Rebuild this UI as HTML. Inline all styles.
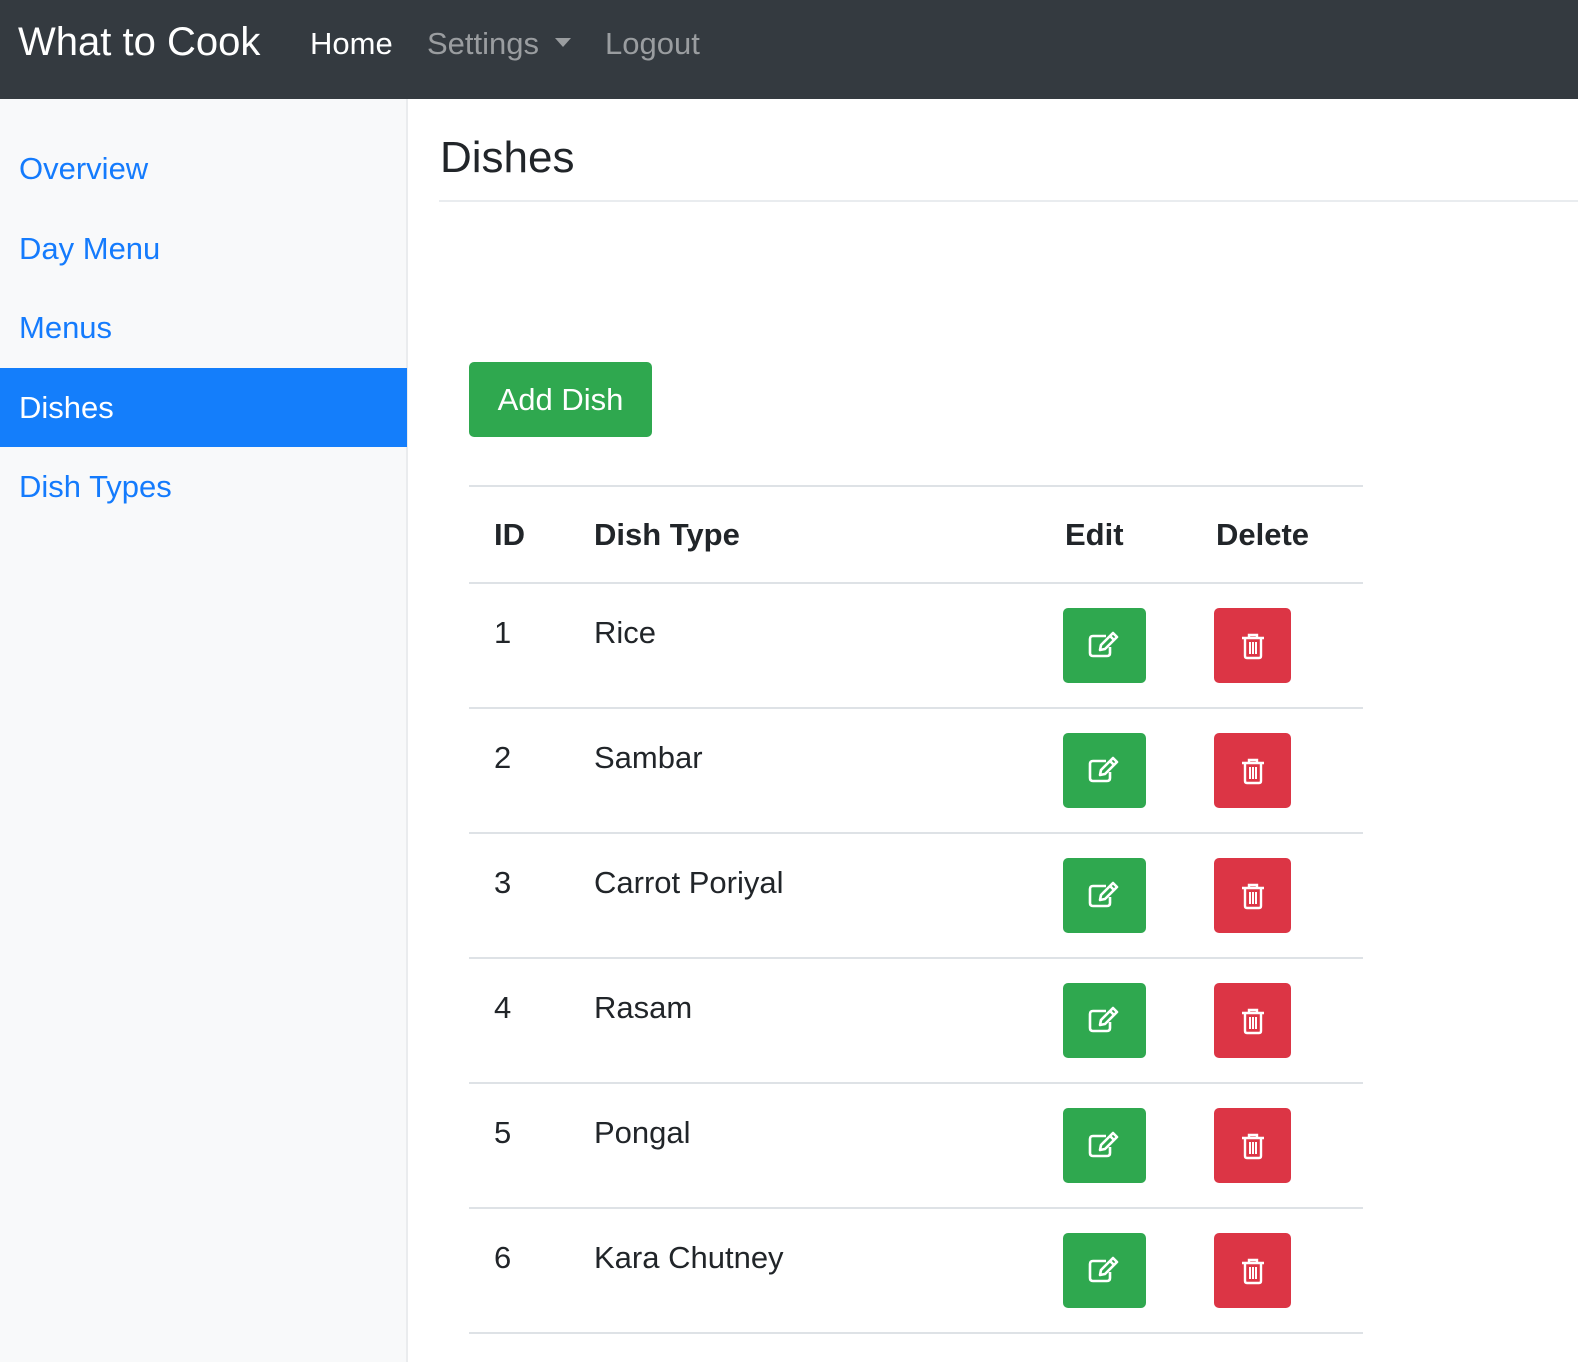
<!DOCTYPE html>
<html><head><meta charset="utf-8"><style>
*{box-sizing:border-box;margin:0;padding:0}
body{width:1578px;height:1362px;overflow:hidden;background:#fff;font-family:"Liberation Sans",Arial,sans-serif;position:relative;color:#212529}
.nav{position:absolute;left:0;top:0;width:1578px;height:99px;background:#343a40}
.nav span{position:absolute;top:22px;font-size:31px;line-height:44px}
.side{position:absolute;left:0;top:99px;width:408px;height:1263px;background:#f8f9fa;border-right:2px solid #eaecee}
.side div{position:absolute;left:0;width:407px;height:79px;padding-left:19px;font-size:31px;line-height:79px;color:#147bfd}
.side div.act{background:#147efb;color:#fff}
h1{position:absolute;left:440px;top:130px;font-size:44px;font-weight:normal;line-height:56px;color:#212529}
.hr{position:absolute;left:439px;top:200px;width:1139px;height:2px;background:#e9ecef}
.add{position:absolute;left:469px;top:362px;width:183px;height:75px;background:#2fa84f;border-radius:5px;color:#fff;font-size:31px;line-height:75px;text-align:center}
.line{position:absolute;left:469px;width:894px;height:2px;background:#dee2e6}
.t{position:absolute;font-size:31px;line-height:40px}
.b{font-weight:bold}
.eb,.db{position:absolute;height:75px;border-radius:5px;display:flex;align-items:center;justify-content:center}
.eb{left:1063px;width:83px;background:#2fa84f}
.db{left:1214px;width:77px;background:#dc3545}
</style></head><body>
<div class="nav">
<span style="left:18px;font-size:40px;color:#fff;top:20px">What to Cook</span>
<span style="left:310px;color:#fff">Home</span>
<span style="left:427px;color:#9a9da0">Settings</span>
<svg style="position:absolute;left:555px;top:38px" width="16" height="10"><path d="M0 0H16L8 9Z" fill="#9a9da0"/></svg>
<span style="left:605px;color:#9a9da0">Logout</span>
</div>
<div class="side">
<div style="top:30px">Overview</div>
<div style="top:110px">Day Menu</div>
<div style="top:189px">Menus</div>
<div class="act" style="top:269px">Dishes</div>
<div style="top:348px">Dish Types</div>
</div>
<h1>Dishes</h1>
<div class="hr"></div>
<div class="add">Add Dish</div>
<div class="line" style="top:485px"></div>
<div class="t b" style="left:494px;top:515px">ID</div>
<div class="t b" style="left:594px;top:515px">Dish Type</div>
<div class="t b" style="left:1065px;top:515px">Edit</div>
<div class="t b" style="left:1216px;top:515px">Delete</div>
<div class="line" style="top:582px"></div>
<div id="rows"></div>
<script>
var names=["Rice","Sambar","Carrot Poriyal","Rasam","Pongal","Kara Chutney"];
var h="";
var edit='<svg width="34" height="30" viewBox="0 0 34 30" fill="none" stroke="#fff" stroke-width="2.6" stroke-linejoin="round"><path d="M18 5H5Q2 5 2 8V22Q2 25 5 25H19Q22 25 22 22V16"/><path d="M12 19L13 14L25 2L29 6L17 18Z"/><path d="M22 5L26 9"/></svg>';
var del='<svg width="26" height="28" viewBox="0 0 26 28" fill="none" stroke="#fff" stroke-width="2.4"><path d="M2 6H24M9 6V3H17V6M5 6V24Q5 26 7 26H19Q21 26 21 24V6"/><path d="M10 10V22M13 10V22M16 10V22" stroke-width="2"/></svg>';
for(var i=0;i<6;i++){var y=583+i*125;
h+='<div class="t" style="left:494px;top:'+(y+30)+'px">'+(i+1)+'</div>';
h+='<div class="t" style="left:594px;top:'+(y+30)+'px">'+names[i]+'</div>';
h+='<div class="eb" style="top:'+(y+25)+'px">'+edit+'</div>';
h+='<div class="db" style="top:'+(y+25)+'px">'+del+'</div>';
h+='<div class="line" style="top:'+(y+124)+'px"></div>';}
document.getElementById("rows").innerHTML=h;
</script>
</body></html>
